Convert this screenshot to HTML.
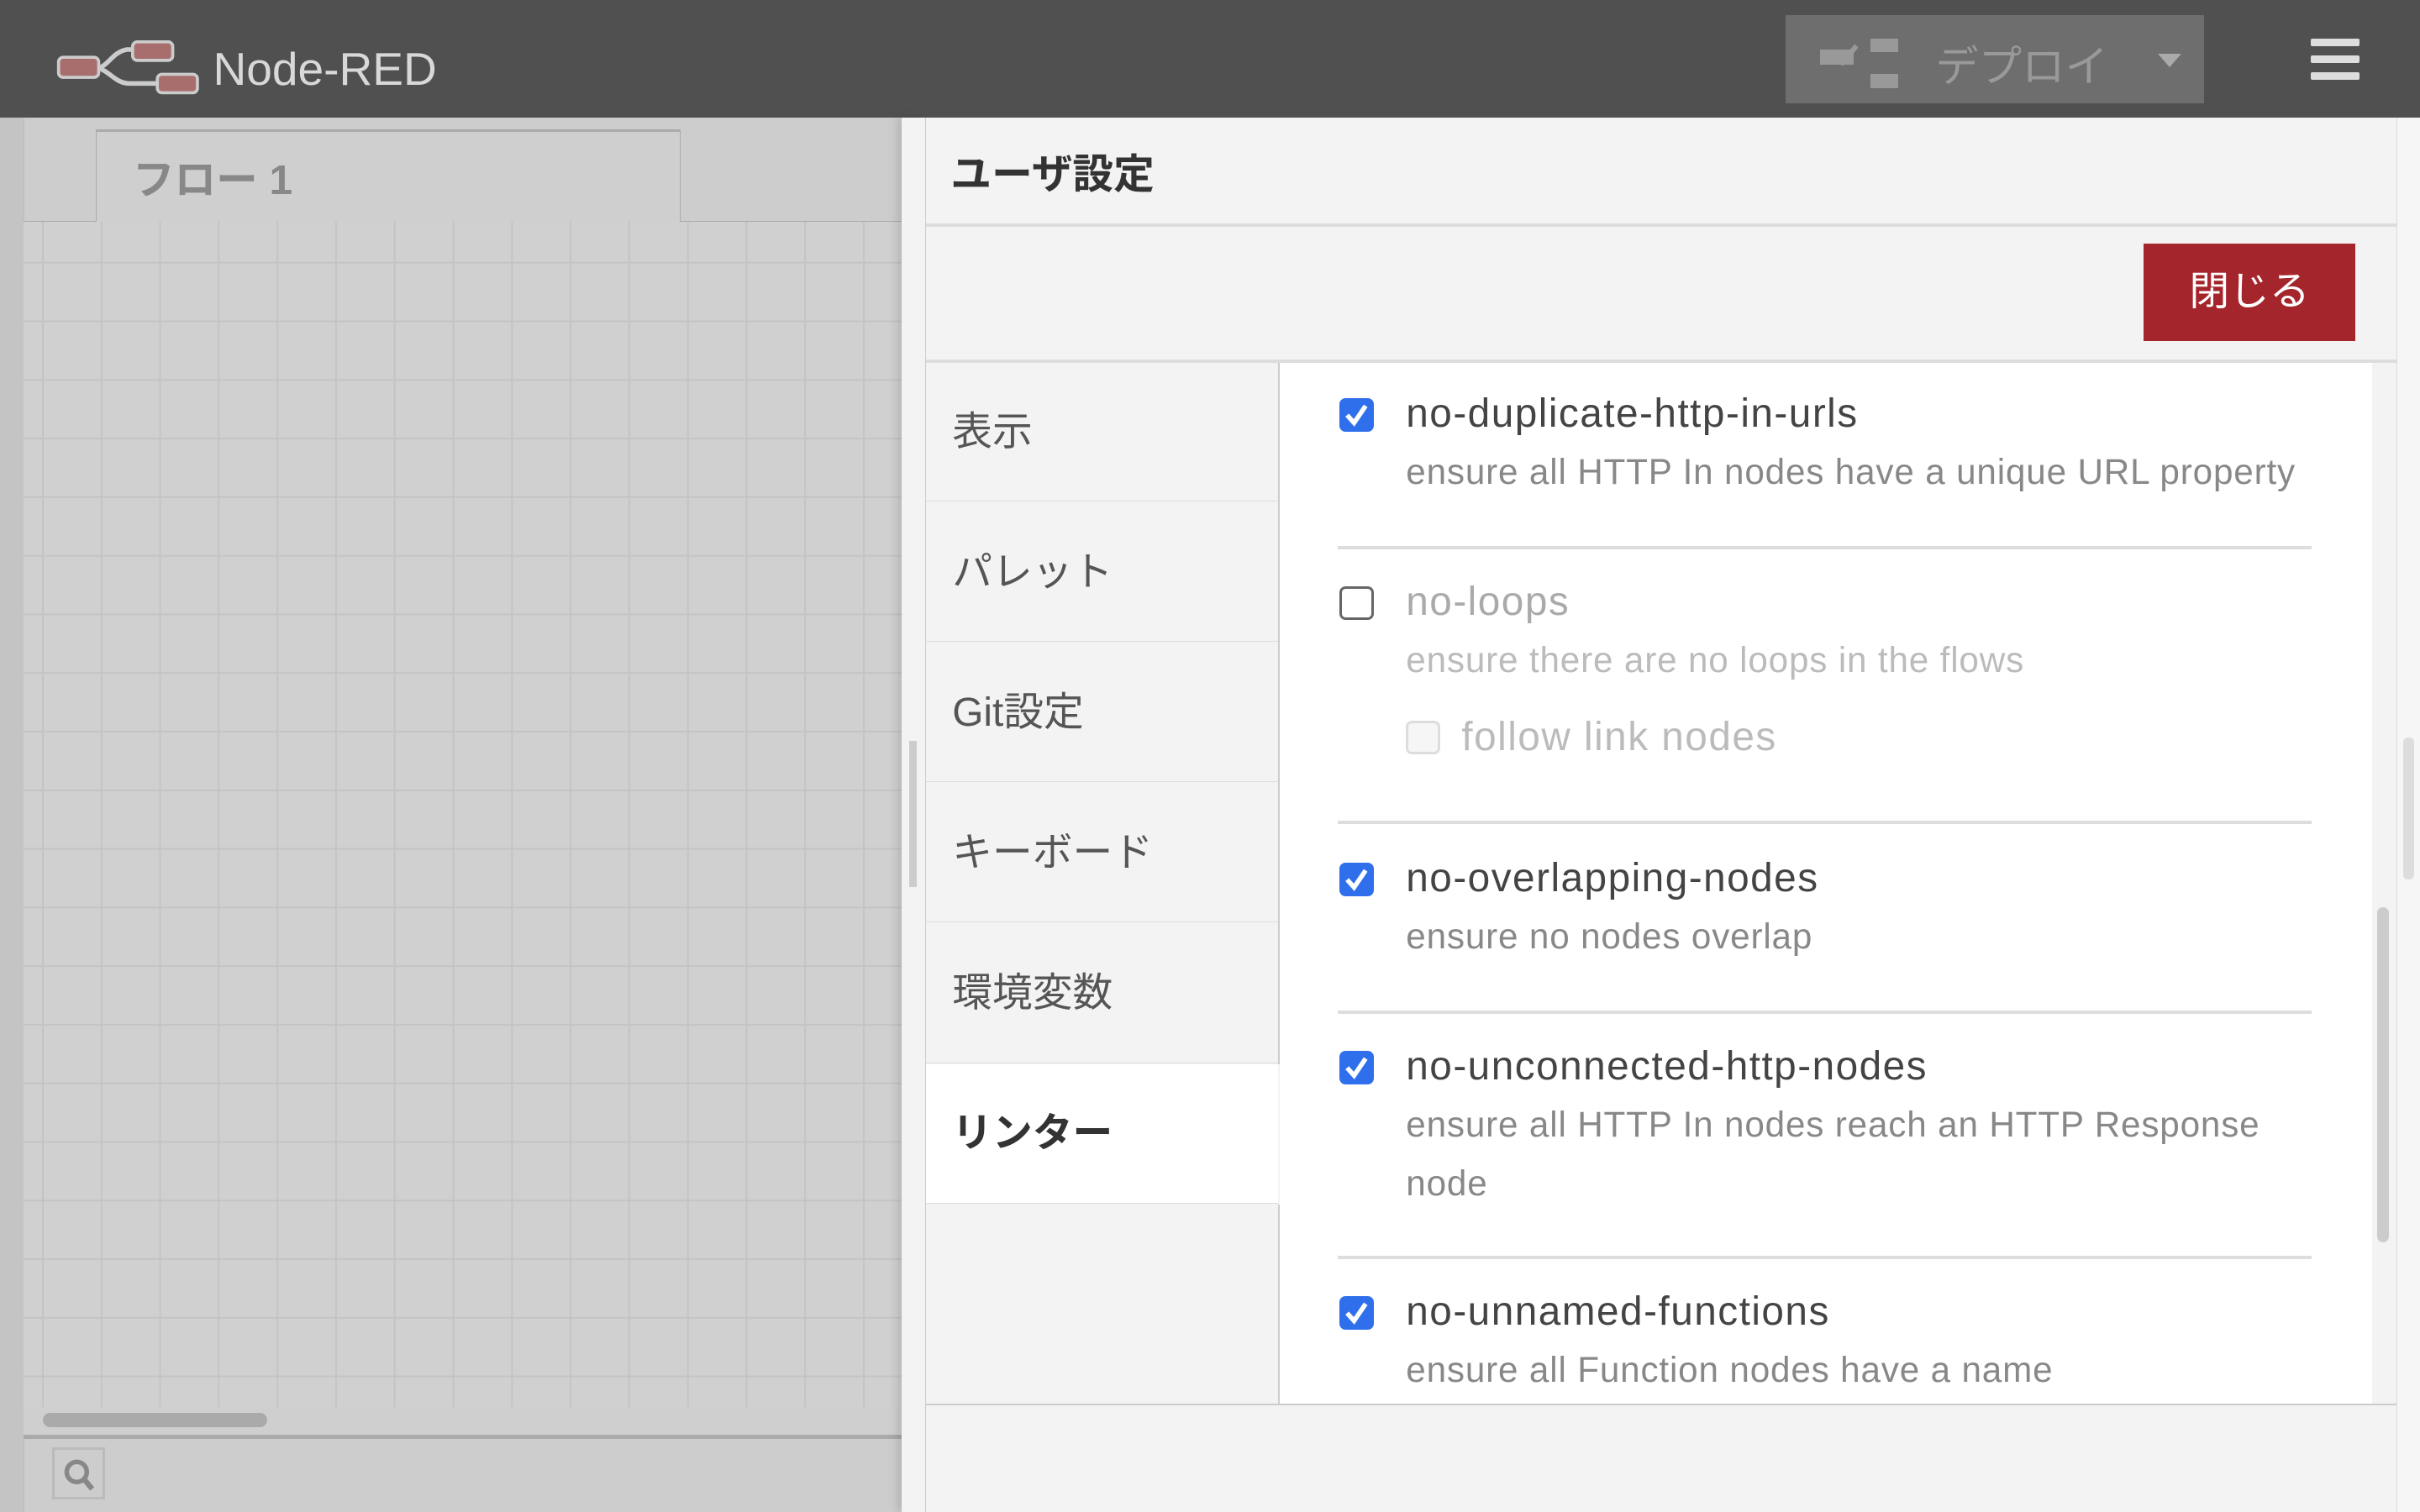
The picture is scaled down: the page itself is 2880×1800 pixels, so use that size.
<!DOCTYPE html>
<html><head><meta charset="utf-8"><style>
html,body{margin:0;padding:0;overflow:hidden;background:#f3f3f3}
body{width:2880px;height:1800px}
#r{zoom:1.836735;width:1568px;height:980px;position:relative;font-family:"Liberation Sans","Noto Sans CJK JP",sans-serif;overflow:hidden}
.a{position:absolute}
.hdr{left:0;top:0;width:1568px;height:76px;background:#505050}
.grid{left:15px;top:144px;width:569px;height:768px;background-color:#d0d0d0;
background-image:linear-gradient(to right,#c4c4c4 1px,transparent 1px),linear-gradient(to bottom,#c4c4c4 1px,transparent 1px);
background-size:38px 38px;background-position:12px 0,0 26px}
.tab{left:600px;width:228px;height:90px;border-bottom:1px solid #ddd;color:#555;font-size:26px;line-height:90px;padding-left:17px;box-sizing:border-box;background:#f3f3f3}
.cb{width:22px;height:22px;border-radius:4px;box-sizing:border-box}
.on{background:#2f6fec}
.off{border:2px solid #666;background:#fff}
.lab{font-size:26px;letter-spacing:0.8px;color:#444;left:911px}
.desc{font-size:23px;letter-spacing:0.45px;color:#888;left:911px}
.sep{left:867px;width:631px;height:2px;background:#ddd}
</style></head><body><div id="r">
<div class="a hdr"></div>
<svg class="a" style="left:36px;top:26px" width="94" height="36" viewBox="0 0 94 36">
<path d="M26 18 C34 18 36 8 46 6 H58 M26 18 C34 18 38 28 48 28 H66" stroke="#ccc" stroke-width="3" fill="none"/>
<rect x="2" y="11" width="26" height="13" rx="3" fill="#a86e6e" stroke="#ccc" stroke-width="2"/>
<rect x="50" y="1" width="26" height="12" rx="3" fill="#a86e6e" stroke="#ccc" stroke-width="2"/>
<rect x="66" y="22" width="26" height="12" rx="3" fill="#a86e6e" stroke="#ccc" stroke-width="2"/>
</svg>
<div class="a" style="left:138px;top:27px;font-size:30px;color:#d8d8d8">Node-RED</div>
<div class="a" style="left:1157px;top:10px;width:271px;height:57px;background:#6e6e6e"></div>
<div class="a" style="left:1179px;top:32px;width:22px;height:10px;background:#999"></div>
<div class="a" style="left:1212px;top:25px;width:18px;height:9px;background:#999"></div>
<div class="a" style="left:1212px;top:48px;width:18px;height:9px;background:#999"></div>
<div class="a" style="left:1196px;top:28px;width:3px;height:16px;background:#999;transform:rotate(40deg)"></div>
<div class="a" style="left:1254px;top:20px;font-size:28px;color:#999">デプロイ</div>
<div class="a" style="left:1398px;top:35px;width:0;height:0;border-left:8px solid transparent;border-right:8px solid transparent;border-top:9px solid #aaa"></div>
<div class="a" style="left:1497px;top:25px;width:32px;height:5px;background:#ddd;border-radius:1px"></div>
<div class="a" style="left:1497px;top:36px;width:32px;height:5px;background:#ddd;border-radius:1px"></div>
<div class="a" style="left:1497px;top:47px;width:32px;height:5px;background:#ddd;border-radius:1px"></div>

<div class="a" style="left:0;top:76px;width:584px;height:904px;background:#cdcdcd"></div>
<div class="a" style="left:0;top:76px;width:15px;height:904px;background:#c4c4c4;border-right:1px solid #bbb"></div>
<div class="a" style="left:15px;top:143px;width:569px;height:2px;background:#aaa"></div>
<div class="a" style="left:62px;top:84px;width:378px;height:61px;background:#cfcfcf;border:1px solid #aaa;border-top:2px solid #aaa;border-bottom:none"></div>
<div class="a" style="left:86px;top:95px;font-size:27px;font-weight:bold;color:#888">フロー 1</div>
<div class="a grid"></div>
<div class="a" style="left:15px;top:912px;width:569px;height:18px;background:#cfcfcf;border-bottom:3px solid #aaa"></div>
<div class="a" style="left:28px;top:916px;width:145px;height:9px;border-radius:5px;background:#aaa"></div>
<div class="a" style="left:34px;top:938px;width:34px;height:34px;border:2px solid #bbb;box-sizing:border-box;background:#cdcdcd"></div>
<svg class="a" style="left:40px;top:944px" width="24" height="24" viewBox="0 0 24 24"><circle cx="10" cy="10" r="6.5" stroke="#888" stroke-width="3" fill="none"/><path d="M15 15 L20 21" stroke="#888" stroke-width="3.5"/></svg>

<div class="a" style="left:584px;top:76px;width:16px;height:904px;background:#f3f3f3;border-right:1px solid #ccc;box-sizing:border-box;box-shadow:-3px 0 6px rgba(0,0,0,.12)"></div>
<div class="a" style="left:589px;top:480px;width:5px;height:95px;background:#ccc"></div>

<div class="a" style="left:600px;top:76px;width:953px;height:904px;background:#f3f3f3"></div>
<div class="a" style="left:616px;top:92px;font-size:26.5px;font-weight:bold;color:#333">ユーザ設定</div>
<div class="a" style="left:600px;top:145px;width:953px;height:2px;background:#ddd"></div>
<div class="a" style="left:1389px;top:158px;width:137px;height:63px;background:#a4262c;color:#fff;font-size:26px;text-align:center;line-height:63px">閉じる</div>
<div class="a" style="left:600px;top:233px;width:953px;height:2px;background:#ddd"></div>
<div class="a" style="left:1553px;top:76px;width:15px;height:904px;background:#f6f6f6;border-left:1px solid #ddd"></div>
<div class="a" style="left:1557px;top:478px;width:7px;height:92px;background:#ddd;border-radius:3px"></div>

<div class="a tab" style="top:235px">表示</div>
<div class="a tab" style="top:326px">パレット</div>
<div class="a tab" style="top:417px">Git設定</div>
<div class="a tab" style="top:508px">キーボード</div>
<div class="a tab" style="top:599px">環境変数</div>
<div class="a tab" style="top:690px;background:#fff;font-weight:bold;color:#333">リンター</div>
<div class="a" style="left:828px;top:235px;width:1px;height:455px;background:#ccc"></div>
<div class="a" style="left:828px;top:781px;width:1px;height:129px;background:#ccc"></div>

<div class="a" style="left:829px;top:235px;width:708px;height:675px;background:#fff"></div>
<div class="a" style="left:1540px;top:588px;width:8px;height:217px;background:#ccc;border-radius:4px"></div>
<div class="a" style="left:600px;top:910px;width:953px;height:1px;background:#ccc"></div>

<div class="a cb on" style="left:868px;top:258px"></div>
<svg class="a" style="left:868px;top:258px" width="22" height="22" viewBox="0 0 22 22"><path d="M5 11 L9.5 16 L17 5" stroke="#fff" stroke-width="3" fill="none"/></svg>
<div class="a lab" style="top:253px">no-duplicate-http-in-urls</div>
<div class="a desc" style="top:293px">ensure all HTTP In nodes have a unique URL property</div>
<div class="a sep" style="top:354px"></div>

<div class="a cb off" style="left:868px;top:380px"></div>
<div class="a lab" style="top:375px;color:#aaa">no-loops</div>
<div class="a desc" style="top:415px;color:#bbb">ensure there are no loops in the flows</div>
<div class="a cb" style="left:911px;top:467px;border:2px solid #ddd;background:#f6f6f6"></div>
<div class="a lab" style="left:947px;top:463px;color:#bbb">follow link nodes</div>
<div class="a sep" style="top:532px"></div>

<div class="a cb on" style="left:868px;top:559px"></div>
<svg class="a" style="left:868px;top:559px" width="22" height="22" viewBox="0 0 22 22"><path d="M5 11 L9.5 16 L17 5" stroke="#fff" stroke-width="3" fill="none"/></svg>
<div class="a lab" style="top:554px">no-overlapping-nodes</div>
<div class="a desc" style="top:594px">ensure no nodes overlap</div>
<div class="a sep" style="top:655px"></div>

<div class="a cb on" style="left:868px;top:681px"></div>
<svg class="a" style="left:868px;top:681px" width="22" height="22" viewBox="0 0 22 22"><path d="M5 11 L9.5 16 L17 5" stroke="#fff" stroke-width="3" fill="none"/></svg>
<div class="a lab" style="top:676px">no-unconnected-http-nodes</div>
<div class="a desc" style="top:716px">ensure all HTTP In nodes reach an HTTP Response</div>
<div class="a desc" style="top:754px">node</div>
<div class="a sep" style="top:814px"></div>

<div class="a cb on" style="left:868px;top:840px"></div>
<svg class="a" style="left:868px;top:840px" width="22" height="22" viewBox="0 0 22 22"><path d="M5 11 L9.5 16 L17 5" stroke="#fff" stroke-width="3" fill="none"/></svg>
<div class="a lab" style="top:835px">no-unnamed-functions</div>
<div class="a desc" style="top:875px">ensure all Function nodes have a name</div>
</div></body></html>
